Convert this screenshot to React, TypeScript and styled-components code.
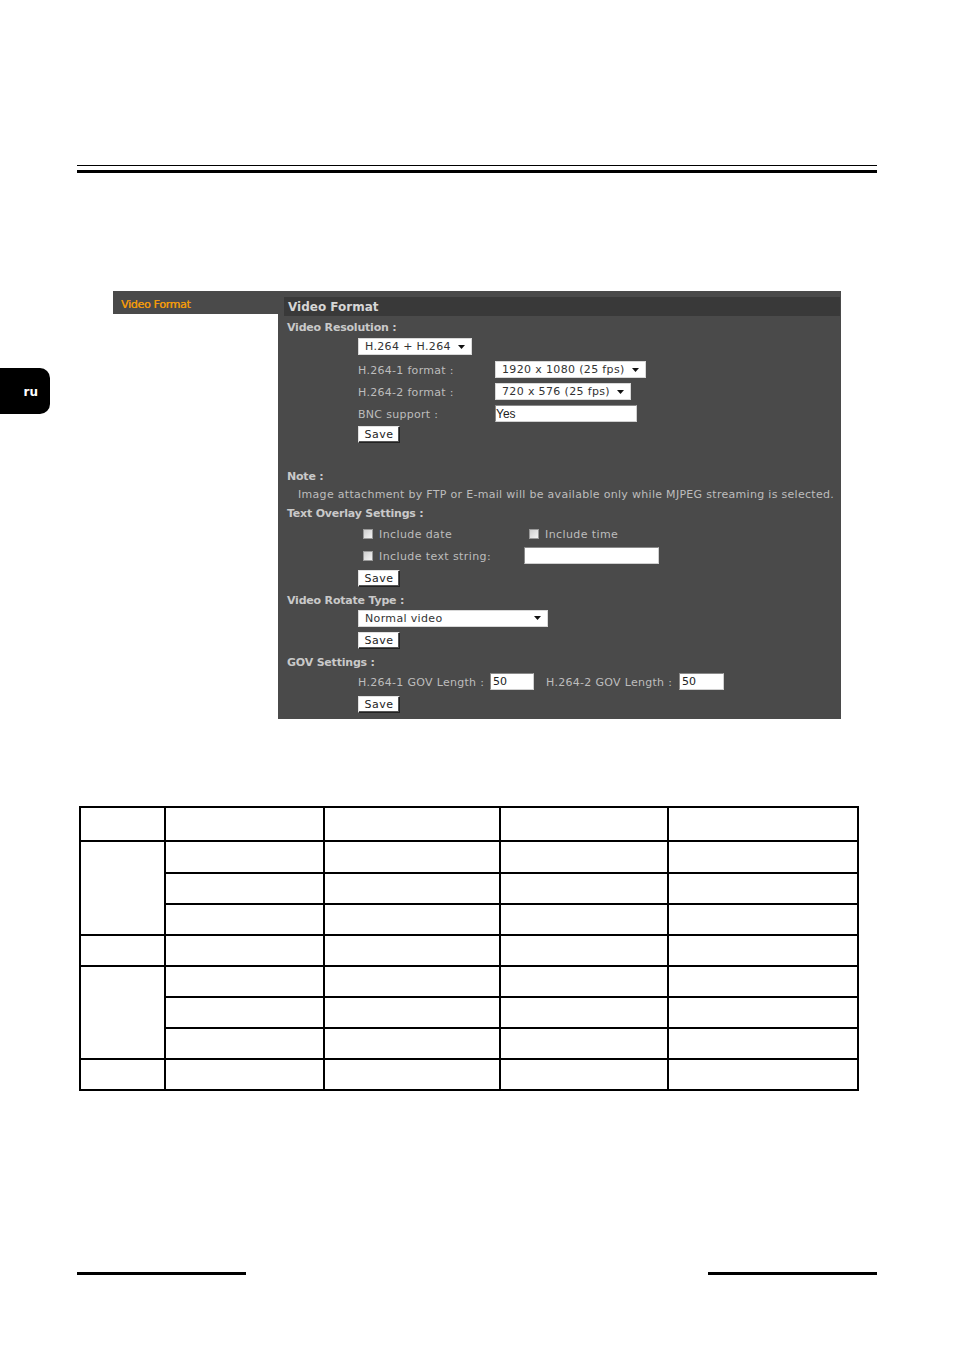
import React from "react";
import styled, { createGlobalStyle } from "styled-components";

const GlobalStyle = createGlobalStyle`
  html, body {
    margin: 0;
    padding: 0;
    background: #ffffff;
  }
  body {
    font-family: "DejaVu Sans", Verdana, sans-serif;
  }
`;

const UI_FONT = `"DejaVu Sans", Verdana, sans-serif`;

const Page = styled.div`
  width: 954px;
  height: 1350px;
  overflow: hidden;
  display: flex;
  flex-direction: column;
`;

/* double rule at the top of the page */
const HeaderRule = styled.div`
  margin: 165px 0 0 77px;
  width: 800px;
  display: flex;
  flex-direction: column;
  gap: 4px;
`;

const RuleLine = styled.div<{ $thick?: boolean }>`
  height: ${({ $thick }) => ($thick ? "3px" : "1px")};
  background: #000;
`;

const Workspace = styled.div`
  margin-top: 118px;
  display: flex;
  align-items: flex-start;
`;

const LangTab = styled.div`
  margin-top: 77px;
  width: 50px;
  height: 46px;
  background: #000;
  border-radius: 0 10px 10px 0;
  color: #fff;
  font: bold 12px ${UI_FONT};
  display: flex;
  align-items: center;
  justify-content: flex-end;
  padding: 1px 12px 0 0;
  box-sizing: border-box;
`;

const SideNav = styled.div`
  margin-left: 63px;
  width: 165px;
  height: 23px;
  background: #4a4a4a;
  box-sizing: border-box;
  padding: 3px 0 0 8px;
  display: flex;
  align-items: center;
  font: 11px ${UI_FONT};
  letter-spacing: -0.3px;
  color: #f29a0c;
  text-shadow: 0.3px 0 0 #f29a0c;
`;

const Panel = styled.div`
  width: 563px;
  height: 428px;
  background: #4a4a4a;
  box-sizing: border-box;
  padding: 6px 1px 0 6px;
  font: 11px ${UI_FONT};
  color: #bdbdbd;
`;

const TitleBar = styled.div`
  height: 19px;
  background: #393939;
  display: flex;
  align-items: center;
  padding-left: 4px;
  font: bold 12px ${UI_FONT};
  color: #d6d6d6;
`;

const PanelBody = styled.div`
  padding-left: 3px;
  display: flex;
  flex-direction: column;
`;

const Heading = styled.div<{ $top: number }>`
  margin-top: ${({ $top }) => $top}px;
  height: 16px;
  line-height: 18px;
  font-weight: bold;
  color: #c9c9c9;
  letter-spacing: -0.2px;
`;

const NoteText = styled.div`
  margin-top: 2px;
  height: 16px;
  line-height: 17px;
  padding-left: 11px;
  letter-spacing: 0.3px;
  white-space: nowrap;
`;

const FieldRow = styled.div<{ $top: number; $h?: number }>`
  margin-top: ${({ $top }) => $top}px;
  height: ${({ $h }) => $h ?? 17}px;
  padding-left: 71px;
  display: flex;
  align-items: center;
  white-space: nowrap;
`;

const FieldLabel = styled.span<{ $w?: number }>`
  width: ${({ $w }) => ($w ? `${$w}px` : "auto")};
  flex-shrink: 0;
  padding-top: 2px;
  letter-spacing: 0.3px;
`;

const SelectBox = styled.div<{ $w: number }>`
  width: ${({ $w }) => $w}px;
  height: 17px;
  box-sizing: border-box;
  background: #fff;
  border: 1px solid #d8d8d8;
  display: flex;
  align-items: center;
  padding: 0 6px 0 6px;
  color: #333;
  font-size: 11px;
  letter-spacing: 0.35px;
  span {
    flex: 1;
  }
`;

const Caret = () => (
  <svg width="7" height="4" viewBox="0 0 7 4">
    <path d="M0 0h7L3.5 4z" fill="#111" />
  </svg>
);

const TextInput = styled.div<{ $w: number; $sans?: boolean }>`
  width: ${({ $w }) => $w}px;
  height: 17px;
  box-sizing: border-box;
  background: #fff;
  border: 1px solid #d0d0d0;
  border-top-color: #8a8a8a;
  border-left-color: #8a8a8a;
  display: flex;
  align-items: center;
  padding-left: ${({ $sans }) => ($sans ? 0 : 2)}px;
  color: #222;
  font: ${({ $sans }) => ($sans ? `12px "Liberation Sans", Arial, sans-serif` : `11px ${UI_FONT}`)};
`;

const SaveButton = styled.div<{ $top: number }>`
  margin: ${({ $top }) => $top}px 0 0 71px;
  width: 42px;
  height: 17px;
  box-sizing: border-box;
  background: #fff;
  border: 1px solid #222;
  border-top-color: #e0e0e0;
  border-left-color: #e0e0e0;
  box-shadow: inset -1px -1px 0 #555;
  display: flex;
  align-items: center;
  justify-content: center;
  color: #222;
  font-size: 11px;
  letter-spacing: 0.5px;
`;

const Check = styled.span`
  display: inline-block;
  width: 10px;
  height: 10px;
  box-sizing: border-box;
  border: 1px solid #9a9a9a;
  background: linear-gradient(135deg, #cfcfcf, #f4f4f4);
  margin: 0 6px 1px 5px;
  flex-shrink: 0;
`;

const CheckLabel = styled.span<{ $w?: number }>`
  display: inline-flex;
  align-items: center;
  width: ${({ $w }) => ($w ? `${$w}px` : "auto")};
  flex-shrink: 0;
  padding-top: 2px;
  letter-spacing: 0.4px;
`;

const Spacer = styled.span<{ $w: number }>`
  display: inline-block;
  width: ${({ $w }) => $w}px;
  flex-shrink: 0;
`;

/* ruled table under the settings panel */
const Grid = styled.table`
  margin: 87px 0 0 79px;
  border-collapse: collapse;
  table-layout: fixed;
  width: 778px;
  td {
    border: 2px solid #000;
    padding: 0;
  }
`;

const GridRow = styled.tr<{ $h: number }>`
  height: ${({ $h }) => $h}px;
`;

const FooterRules = styled.div`
  margin-top: 181px;
  padding: 0 77px;
  display: flex;
  justify-content: space-between;
`;

const FooterLine = styled.div`
  width: 169px;
  height: 3px;
  background: #000;
`;

const colWidths = [85, 159, 176, 168, 190];

const Cells: React.FC<{ n: number }> = ({ n }) => (
  <>
    {Array.from({ length: n }).map((_, i) => (
      <td key={i} />
    ))}
  </>
);

export default function App() {
  return (
    <Page>
      <GlobalStyle />
      <HeaderRule>
        <RuleLine />
        <RuleLine $thick />
      </HeaderRule>

      <Workspace>
        <LangTab>ru</LangTab>
        <SideNav>Video Format</SideNav>
        <Panel>
          <TitleBar>Video Format</TitleBar>
          <PanelBody>
            <Heading $top={3}>Video Resolution :</Heading>
            <FieldRow $top={3}>
              <SelectBox $w={114}>
                <span>H.264 + H.264</span>
                <Caret />
              </SelectBox>
            </FieldRow>
            <FieldRow $top={6}>
              <FieldLabel $w={137}>H.264-1 format :</FieldLabel>
              <SelectBox $w={151}>
                <span>1920 x 1080 (25 fps)</span>
                <Caret />
              </SelectBox>
            </FieldRow>
            <FieldRow $top={5}>
              <FieldLabel $w={137}>H.264-2 format :</FieldLabel>
              <SelectBox $w={136}>
                <span>720 x 576 (25 fps)</span>
                <Caret />
              </SelectBox>
            </FieldRow>
            <FieldRow $top={5}>
              <FieldLabel $w={137}>BNC support :</FieldLabel>
              <TextInput $w={142} $sans>
                Yes
              </TextInput>
            </FieldRow>
            <SaveButton $top={4}>Save</SaveButton>

            <Heading $top={25}>Note :</Heading>
            <NoteText>
              Image attachment by FTP or E-mail will be available only while MJPEG streaming is selected.
            </NoteText>
            <Heading $top={3}>Text Overlay Settings :</Heading>
            <FieldRow $top={4} $h={16}>
              <CheckLabel $w={166}>
                <Check />
                Include date
              </CheckLabel>
              <CheckLabel>
                <Check />
                Include time
              </CheckLabel>
            </FieldRow>
            <FieldRow $top={6}>
              <CheckLabel $w={166}>
                <Check />
                Include text string:
              </CheckLabel>
              <TextInput $w={135} />
            </FieldRow>
            <SaveButton $top={6}>Save</SaveButton>

            <Heading $top={5}>Video Rotate Type :</Heading>
            <FieldRow $top={1} $h={18}>
              <SelectBox $w={190}>
                <span>Normal video</span>
                <Caret />
              </SelectBox>
            </FieldRow>
            <SaveButton $top={5}>Save</SaveButton>

            <Heading $top={5}>GOV Settings :</Heading>
            <FieldRow $top={3}>
              <FieldLabel $w={132}>H.264-1 GOV Length :</FieldLabel>
              <TextInput $w={44}>50</TextInput>
              <Spacer $w={12} />
              <FieldLabel $w={133}>H.264-2 GOV Length :</FieldLabel>
              <TextInput $w={45}>50</TextInput>
            </FieldRow>
            <SaveButton $top={6}>Save</SaveButton>
          </PanelBody>
        </Panel>
      </Workspace>

      <Grid>
        <colgroup>
          {colWidths.map((w, i) => (
            <col key={i} style={{ width: w }} />
          ))}
        </colgroup>
        <tbody>
          <GridRow $h={34}>
            <Cells n={5} />
          </GridRow>
          <GridRow $h={32}>
            <td rowSpan={3} />
            <Cells n={4} />
          </GridRow>
          <GridRow $h={31}>
            <Cells n={4} />
          </GridRow>
          <GridRow $h={31}>
            <Cells n={4} />
          </GridRow>
          <GridRow $h={31}>
            <Cells n={5} />
          </GridRow>
          <GridRow $h={31}>
            <td rowSpan={3} />
            <Cells n={4} />
          </GridRow>
          <GridRow $h={31}>
            <Cells n={4} />
          </GridRow>
          <GridRow $h={31}>
            <Cells n={4} />
          </GridRow>
          <GridRow $h={31}>
            <Cells n={5} />
          </GridRow>
        </tbody>
      </Grid>

      <FooterRules>
        <FooterLine />
        <FooterLine />
      </FooterRules>
    </Page>
  );
}
